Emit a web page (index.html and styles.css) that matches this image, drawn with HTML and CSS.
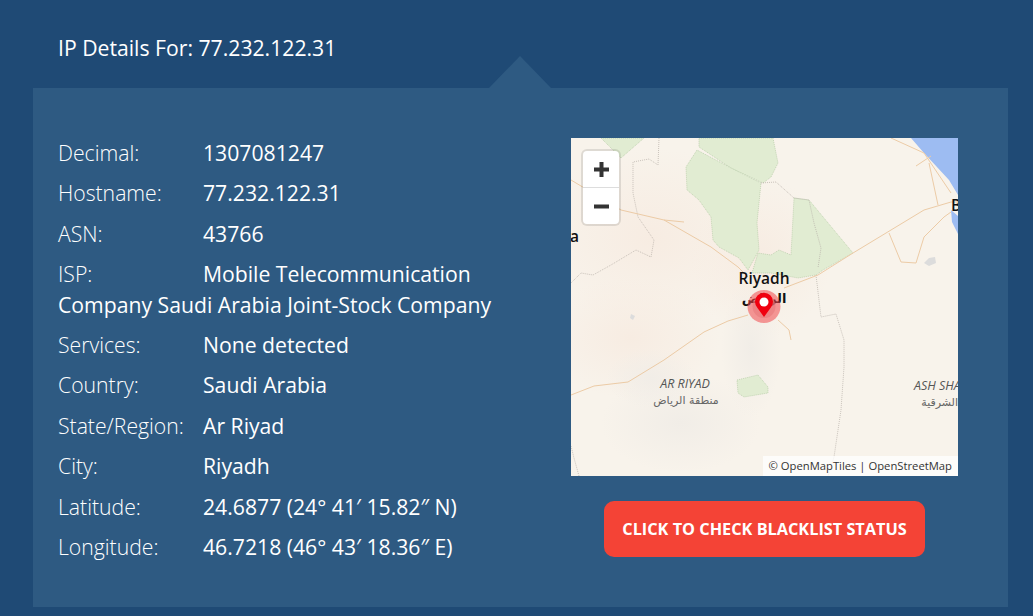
FILE: index.html
```
<!DOCTYPE html>
<html lang="en">
<head>
<meta charset="utf-8">
<title>IP Details</title>
<link rel="stylesheet" href="styles.css">
</head>
<body>
<main class="page">
  <h2 class="title">IP Details For: 77.232.122.31</h2>
  <section class="panel">
    <div class="details">
      <p class="row"><span class="label">Decimal:</span>1307081247</p>
      <p class="row"><span class="label">Hostname:</span>77.232.122.31</p>
      <p class="row"><span class="label">ASN:</span>43766</p>
      <p class="row"><span class="label">ISP:</span>Mobile Telecommunication Company Saudi Arabia Joint-Stock Company</p>
      <p class="row"><span class="label">Services:</span>None detected</p>
      <p class="row"><span class="label">Country:</span>Saudi Arabia</p>
      <p class="row"><span class="label">State/Region:</span>Ar Riyad</p>
      <p class="row"><span class="label">City:</span>Riyadh</p>
      <p class="row"><span class="label">Latitude:</span>24.6877 (24° 41′ 15.82″ N)</p>
      <p class="row"><span class="label">Longitude:</span>46.7218 (46° 43′ 18.36″ E)</p>
    </div>
    <div class="side">
      <div class="map">
        <svg class="map-art" width="387" height="338" viewBox="0 0 387 338">
          <defs>
            <radialGradient id="pink"><stop offset="0" stop-color="#f7ece2"/><stop offset="1" stop-color="#f7ece2" stop-opacity="0"/></radialGradient>
            <radialGradient id="grey"><stop offset="0" stop-color="#f1ede7"/><stop offset="1" stop-color="#f1ede7" stop-opacity="0"/></radialGradient>
          </defs>
          <rect width="387" height="338" fill="#f8f3eb"/>
          <ellipse cx="80" cy="100" rx="120" ry="90" fill="url(#pink)"/>
          <ellipse cx="190" cy="120" rx="70" ry="80" fill="url(#pink)"/>
          <ellipse cx="60" cy="200" rx="90" ry="60" fill="url(#pink)"/>
          <ellipse cx="110" cy="285" rx="80" ry="50" fill="url(#grey)"/>
          <ellipse cx="80" cy="240" rx="45" ry="30" fill="url(#grey)"/>
          <ellipse cx="180" cy="210" rx="30" ry="70" fill="url(#grey)"/>
          <path class="water" d="M340 0H387V57L378 42 353 15Z"/>
          <path class="water" d="M380 72L387 78V96L381 84Z"/>
          <path class="park" d="M30 0H73L50 20Z"/>
          <path class="park" d="M128 0H202L207 25 200 39 192 45 160 30 128 9Z"/>
          <path class="park" d="M126 12L115 29 116 52 128 62 140 79 142 102 148 109 168 120 177 132 188 112 186 85 190 45 160 30Z"/>
          <path class="park" d="M223 60L238 62 282 115 252 132 245 137 227 140 200 135 181 135 187 115 200 117 208 112 220 117Z"/>
          <path class="park" d="M166 242L187 237 197 249 197 255 173 259 167 255Z"/>
          <path class="lake" d="M358 120L364 119 365 125 358 128 353 125Z"/>
          <path class="lake" d="M60 176L64 178 62 182 59 180Z"/>
          <path class="border" d="M88 0L87 27 78 21 62 24 62 55 67 79 83 102 80 119 65 112 40 127 22 137 10 135 0 145"/>
          <path class="border" d="M245 137L250 179 265 176 273 202 273 229 270 272 263 319 257 338"/>
          <path class="border" d="M190 45L205 44 223 60 238 62 243 85 250 110 247 130"/>
          <path class="border" d="M0 308L3 320 8 338"/>
          <path class="road" d="M0 42L50 72 93 82 140 109 167 129 177 139M93 82L113 84"/>
          <path class="road" d="M213 150L247 137 282 115 320 92 353 72 380 64 387 64"/>
          <path class="road" d="M0 257L23 248 57 244 93 222 133 194 157 183 177 177"/>
          <path class="road" d="M207 182L218 192 220 202"/>
          <path class="road" d="M320 0L353 15 380 55M358 25L367 67M318 95L330 124 345 125 353 99 373 79 380 74M345 28L360 18"/>
          <text class="city" x="-1" y="104">a</text>
          <text class="city" x="380" y="73">B</text>
          <text class="city" x="193" y="146" text-anchor="middle">Riyadh</text>
          <text class="city-ar" x="193" y="165" text-anchor="middle">الرياض</text>
          <text class="region" x="114" y="250" text-anchor="middle">AR RIYAD</text>
          <text class="region-ar" x="115" y="266" text-anchor="middle">منطقة الرياض</text>
          <text class="region" x="343" y="252">ASH SHARQIYAH</text>
          <text class="region-ar" x="387" y="268" text-anchor="end">الشرقية</text>
          <circle cx="193" cy="168.500" r="16.500" fill="#f0484c" fill-opacity=".55"/>
          <circle cx="193" cy="168.500" r="11.500" fill="#e87a7c" fill-opacity=".6"/>
          <path d="M193 179L186.500 170A9 9 0 1 1 199.500 170Z" fill="#f0000f"/>
          <circle cx="193" cy="164" r="4.500" fill="#fff"/>
        </svg>
        <div class="zoom">
          <button class="zoom-btn" type="button" aria-label="Zoom in"><svg width="15" height="15" viewBox="0 0 15 15"><path d="M0 5.500H5.500V0H9.500V5.500H15V9.500H9.500V15H5.500V9.500H0Z" fill="#333"/></svg></button>
          <button class="zoom-btn" type="button" aria-label="Zoom out"><svg width="15" height="15" viewBox="0 0 15 15"><path d="M0 5.500H15V9.500H0Z" fill="#333"/></svg></button>
        </div>
        <div class="attribution">© OpenMapTiles | OpenStreetMap</div>
      </div>
      <a class="check" href="#">Click to check blacklist status</a>
    </div>
  </section>
</main>
</body>
</html>
```
FILE: styles.css
```
* { box-sizing: border-box; }
html, body { margin: 0; height: 100%; }
body {
  background: #1f4a75;
  color: #fff;
  font-family: "Open Sans", "Liberation Sans", sans-serif;
  overflow: hidden;
}
.page { padding: 0 25px 9px 33px; }
.title {
  margin: 0;
  padding: 33px 0 0 25px;
  height: 88px;
  font-size: 21.200px;
  line-height: 30px;
  font-weight: 400;
}
.panel {
  position: relative;
  display: flex;
  justify-content: space-between;
  height: 519px;
  padding: 50px 50px 0 25px;
  background: #2e5a82;
}
.panel::before {
  content: "";
  position: absolute;
  left: 456px;
  top: -32px;
  width: 62px;
  height: 32px;
  background: #2e5a82;
  clip-path: polygon(50% 0, 100% 100%, 0 100%);
}
.details { width: 470px; }
.row {
  margin: 0 0 10px;
  font-size: 21.200px;
  line-height: 30.400px;
}
.label {
  display: inline-block;
  width: 145px;
  font-weight: 300;
}
.side { width: 387px; }
.map {
  position: relative;
  width: 387px;
  height: 338px;
  overflow: hidden;
}
.map-art { display: block; }
.water { fill: #9dbcf2; }
.park { fill: #e1ecd2; stroke: #a9c29a; stroke-width: .6; stroke-dasharray: 1 1; }
.lake { fill: #dcdcdc; }
.border { fill: none; stroke: #b5aea6; stroke-width: .7; stroke-dasharray: 1 1; }
.road { fill: none; stroke: #eccba6; stroke-width: 1; }
.city { font: 600 15.500px "Open Sans", sans-serif; fill: #111; }
.city-ar { font: 700 13px "DejaVu Sans", sans-serif; fill: #111; }
.region { font: italic 400 12.500px "Open Sans", sans-serif; fill: #555; }
.region-ar { font: 400 11px "DejaVu Sans", sans-serif; fill: #666; }
.zoom {
  position: absolute;
  left: 12px;
  top: 13px;
  width: 36px;
  height: 73px;
  display: flex;
  flex-direction: column;
  background: #fff;
  border-radius: 4px;
  box-shadow: 0 0 0 2px rgba(0, 0, 0, .1);
}
.zoom-btn {
  flex: 1;
  display: flex;
  align-items: center;
  justify-content: center;
  padding: 0;
  border: 0;
  background: none;
}
.zoom-btn + .zoom-btn { border-top: 1px solid #ddd; }
.attribution {
  position: absolute;
  right: 0;
  bottom: 0;
  padding: 0 6px;
  height: 20px;
  font-size: 11.250px;
  line-height: 20px;
  color: #333;
  background: rgba(255, 255, 255, .75);
}
.check {
  display: block;
  width: 321px;
  height: 56px;
  margin: 25px 0 0 33px;
  border-radius: 10px;
  background: #f44336;
  color: #fff;
  font-size: 16.300px;
  font-weight: 700;
  line-height: 56px;
  text-align: center;
  text-transform: uppercase;
  text-decoration: none;
}
```
